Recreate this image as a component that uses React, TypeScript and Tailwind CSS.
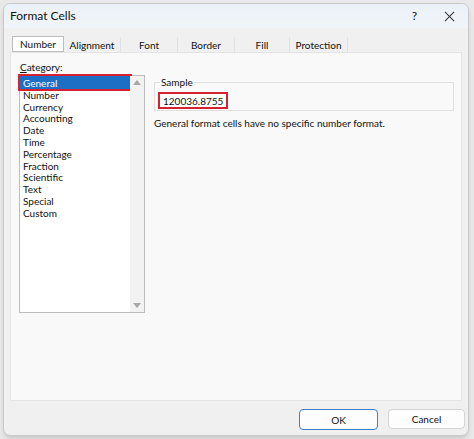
import React from 'react';

const FONT = { fontFamily: 'Lato, "Noto Sans", sans-serif' };

const TABS = ['Number', 'Alignment', 'Font', 'Border', 'Fill', 'Protection'];
const TAB_WIDTHS = ['w-[52px]', 'w-[57px]', 'w-[57px]', 'w-[57px]', 'w-[55px]', 'w-[58px]'];

const CATEGORIES = [
  'General',
  'Number',
  'Currency',
  'Accounting',
  'Date',
  'Time',
  'Percentage',
  'Fraction',
  'Scientific',
  'Text',
  'Special',
  'Custom',
];

const App: React.FC = () => {
  return (
    <div className="w-[474px] h-[439px] bg-[#e9e9e9] pt-[3px] pl-[3px] overflow-hidden" style={FONT}>
      <div className="w-[466px] h-[433px] rounded-[7px] border border-[#c9c9c9] bg-[#f0f0f0] shadow-md flex flex-col overflow-hidden text-[#111]">
        {/* Title bar */}
        <div className="h-[24px] shrink-0 flex items-center bg-gradient-to-b from-[#eaf1f8] to-[#f1f5f9] pl-[6px] pr-[8px]">
          <span className="text-[12px] leading-none">Format Cells</span>
          <span className="ml-auto text-[12px] leading-none mr-[27px]">?</span>
          <svg width="11" height="11" viewBox="0 0 12 12" className="mr-[5px]">
            <path d="M1 1 L11 11 M11 1 L1 11" stroke="#333" strokeWidth="1.1" />
          </svg>
        </div>

        {/* Tabs */}
        <div className="flex items-end pl-[8px] mt-[8px] h-[16px] shrink-0">
          {TABS.map((tab, i) => (
            <div
              key={tab}
              className={`${TAB_WIDTHS[i]} flex items-center justify-center text-[10px] leading-none ${
                i === 0
                  ? 'bg-white border border-[#bdbdbd] h-[16px]'
                  : 'h-[15px] bg-[#f0f0f0] border-r border-[#e2e2e2]'
              }`}
            >
              {tab}
            </div>
          ))}
        </div>

        {/* Content panel */}
        <div className="mx-[6px] h-[349px] shrink-0 bg-[#f9f9f9] border border-[#e4e4e4] flex pt-[9px] pl-[8px] pr-[7px]">
          {/* Category column */}
          <div className="flex flex-col w-[126px]">
            <span className="text-[10px] leading-none mb-[3px] pl-[1px]">
              <span className="underline">C</span>ategory:
            </span>
            <div className="h-[238px] bg-white border border-[#bcbcbc] flex">
              <div className="flex-1 flex flex-col">
                {CATEGORIES.map((c, i) => (
                  <div
                    key={c}
                    className={`flex items-center pl-[3px] text-[10px] leading-none ${
                      i === 0 ? 'h-[13px] bg-[#1c6fc4] text-white outline-2 outline-[#d62230]' : 'h-[11.8px]'
                    }`}
                  >
                    {c}
                  </div>
                ))}
              </div>
              <div className="w-[14px] bg-[#f2f2f2] flex flex-col items-center justify-between py-[4px]">
                <svg width="8" height="5" viewBox="0 0 8 5">
                  <path d="M0 5 L4 0 L8 5 Z" fill="#a8a8a8" />
                </svg>
                <svg width="8" height="5" viewBox="0 0 8 5">
                  <path d="M0 0 L4 5 L8 0 Z" fill="#a8a8a8" />
                </svg>
              </div>
            </div>
          </div>

          {/* Right side */}
          <div className="flex-1 flex flex-col pl-[9px] pt-[20px]">
            <div className="relative flex items-start border border-[#e0e0e0] h-[29px] pl-[3px] pt-[9px]">
              <span className="absolute -top-[6px] left-[5px] bg-[#f9f9f9] px-[1px] text-[10px] leading-none">
                Sample
              </span>
              <div className="flex h-[17px] border-2 border-[#d62230] items-center px-[3px] text-[10px] leading-none bg-white">
                120036.8755
              </div>
            </div>
            <p className="text-[10px] leading-none mt-[7px]">General format cells have no specific number format.</p>
          </div>
        </div>

        {/* Buttons */}
        <div className="flex justify-end gap-[10px] pr-[3px] mt-[8px]">
          <button className="w-[79px] h-[21px] bg-[#fdfdfd] border border-[#3c7fc4] rounded-[4px] text-[10px] leading-none">
            OK
          </button>
          <button className="w-[77px] h-[20px] bg-[#fdfdfd] border border-[#d4d4d4] rounded-[4px] text-[10px] leading-none">
            Cancel
          </button>
        </div>
      </div>
    </div>
  );
};

export default App;
